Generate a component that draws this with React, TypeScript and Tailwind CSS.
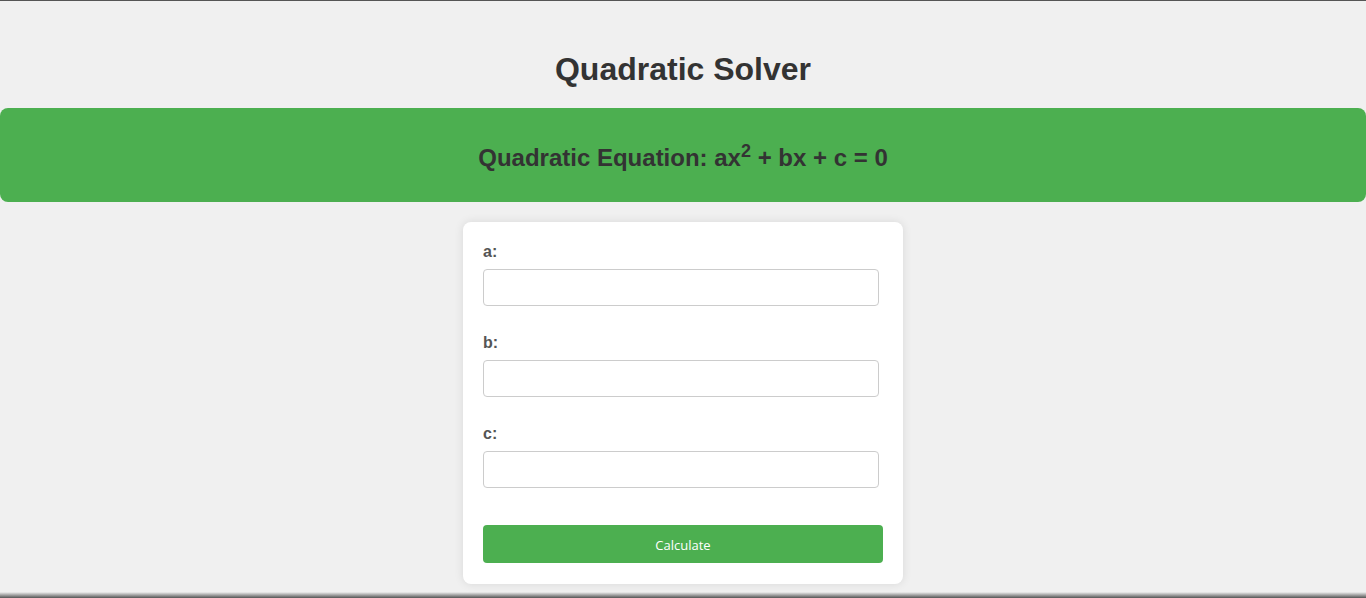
export default function App() {
  const fields = ["a", "b", "c"];

  return (
    <div className="min-h-[598px] bg-[#f0f0f0] border-t border-[#555] font-['Liberation_Sans',Arial,sans-serif] text-[#333]">
      <h1 className="pt-[50px] pb-[20px] text-center text-[32px] leading-[37px] font-bold">Quadratic Solver</h1>

      {/* Equation banner */}
      <div className="h-[94px] rounded-lg bg-[#4caf50] flex items-center justify-center">
        <h2 className="pt-[6px] text-[24px] font-bold leading-[28px]">
          Quadratic Equation: ax<sup className="text-[18px] relative -top-[9px]">2</sup> + bx + c = 0
        </h2>
      </div>

      {/* Form card */}
      <div className="mx-auto mt-[20px] w-[440px] rounded-lg bg-white px-5 pt-5 pb-[21px] shadow-[0_0_10px_rgba(0,0,0,0.1)]">
        {fields.map((f) => (
          <div key={f} className="mb-[27px]">
            <label className="block mb-[7px] text-[16px] leading-[20px] font-bold text-[#555]">{f}:</label>
            <input
              type="text"
              className="block w-[396px] h-[37px] rounded border border-[#ccc] bg-white px-2 outline-none"
            />
          </div>
        ))}
        <button className="mt-[10px] w-full h-[38px] pt-[3px] rounded bg-[#4caf50] text-white text-[13px] font-['Open_Sans',sans-serif]">
          Calculate
        </button>
      </div>

      <div className="fixed left-0 right-0 bottom-0 h-[6px] bg-gradient-to-b from-transparent to-[#555]"></div>
    </div>
  );
}
